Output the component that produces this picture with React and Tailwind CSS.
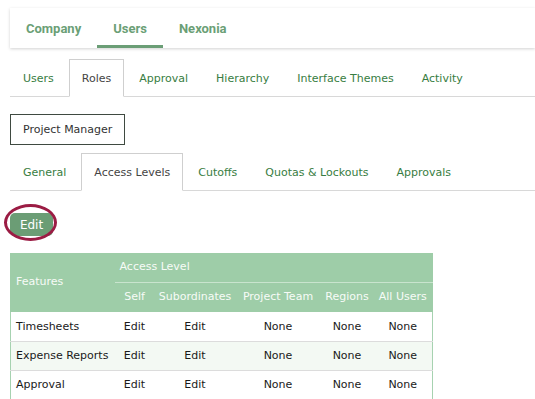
import React from "react";

const subTabs = ["Users", "Roles", "Approval", "Hierarchy", "Interface Themes", "Activity"];
const roleTabs = ["General", "Access Levels", "Cutoffs", "Quotas & Lockouts", "Approvals"];
const rows = [
  ["Timesheets", "Edit", "Edit", "None", "None", "None"],
  ["Expense Reports", "Edit", "Edit", "None", "None", "None"],
  ["Approval", "Edit", "Edit", "None", "None", "None"],
];

function TabRow({ tabs, active }) {
  return (
    <div className="ml-[10px] flex border-b border-[#d8d8d8]">
      {tabs.map((t) => (
        <div
          key={t}
          className={
            t === active
              ? "h-[38px] flex items-center pt-[2px] px-[12px] mr-[2px] -mb-px border border-[#cfcfcf] border-b-white bg-white text-[#444]"
              : "h-[38px] flex items-center pt-[2px] px-[12px] mr-[2px] -mb-px border border-transparent text-[#387d42]"
          }
        >
          {t}
        </div>
      ))}
    </div>
  );
}

export default function App() {
  return (
    <div className="w-[535px] h-[399px] overflow-hidden bg-white font-['DejaVu_Sans',sans-serif] text-[11px]">
      <div className="pt-[8px] pl-[10px]">
        <div className="h-[40px] flex bg-white shadow-[0_1px_3px_rgba(0,0,0,0.18)] font-['Roboto',sans-serif] font-bold text-[13px] text-[#6b9f76]">
          {["Company", "Users", "Nexonia"].map((t) => (
            <div key={t} className="relative h-full flex items-center pt-[1px] px-[16px]">
              {t}
              {t === "Users" && (
                <span className="absolute left-0 right-0 bottom-0 h-[3px] bg-[#6b9e76]" />
              )}
            </div>
          ))}
        </div>
      </div>

      <div className="mt-[11px]">
        <TabRow tabs={subTabs} active="Roles" />
      </div>

      <div className="mt-[17px] ml-[10px] inline-flex h-[31px] items-center pt-[1px] px-[12px] border border-[#3f4a41] text-[#333]">
        Project Manager
      </div>

      <div className="mt-[8px]">
        <TabRow tabs={roleTabs} active="Access Levels" />
      </div>

      <div className="relative mt-[22px] ml-[10px] h-[23px]">
        <button className="h-[23px] w-[43px] rounded-[5px] bg-[#6b9d75] text-white text-[12px] flex items-center justify-center">
          Edit
        </button>
        <span className="absolute left-[-6px] top-[-9px] w-[53px] h-[37px] rounded-[50%] border-[3px] border-[#9b1c44]" />
      </div>

      <table className="mt-[17px] ml-[10px] border-collapse table-fixed w-[422px]">
        <colgroup>
          <col className="w-[104px]" />
          <col className="w-[40px]" />
          <col className="w-[81px]" />
          <col className="w-[85px]" />
          <col className="w-[53px]" />
          <col className="w-[59px]" />
        </colgroup>
        <thead className="bg-[#9ecda8] text-[#f7fbf7] font-normal">
          <tr className="h-[29px]">
            <th rowSpan={2} className="font-normal text-left pl-[5px] border-l border-[#9ecda8]">
              Features
            </th>
            <th colSpan={5} className="font-normal text-left pl-[5px] border-b border-[#c9e4ce] border-r border-r-[#9ecda8]">
              Access Level
            </th>
          </tr>
          <tr className="h-[30px]">
            <th className="font-normal text-center">Self</th>
            <th className="font-normal text-center">Subordinates</th>
            <th className="font-normal text-center">Project Team</th>
            <th className="font-normal text-center">Regions</th>
            <th className="font-normal text-center border-r border-[#9ecda8]">All Users</th>
          </tr>
        </thead>
        <tbody className="text-[#1a1a1a]">
          {rows.map((r, i) => (
            <tr key={r[0]} className={i === 1 ? "h-[29px] bg-[#f3f9f3]" : "h-[29px] bg-white"}>
              {r.map((c, j) => (
                <td
                  key={j}
                  className={
                    (j === 0 ? "text-left pl-[5px] border-l border-l-[#a6d2b0] " : "text-center ") +
                    (j === 5 ? "border-r border-r-[#a6d2b0] " : "") +
                    "pt-[1px] border-b border-[#dcdcdc] whitespace-nowrap"
                  }
                >
                  {c}
                </td>
              ))}
            </tr>
          ))}
        </tbody>
      </table>
    </div>
  );
}
